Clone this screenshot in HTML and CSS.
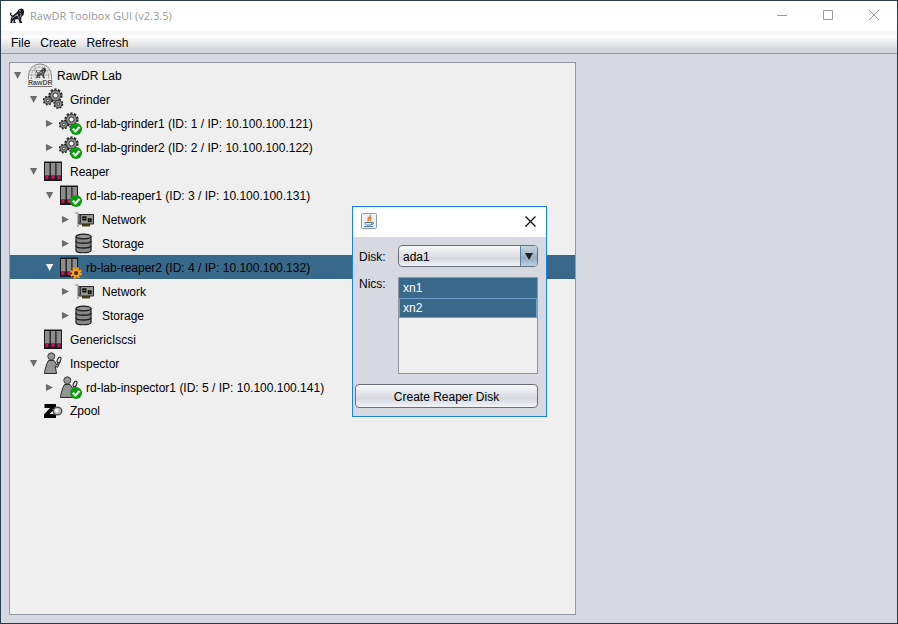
FILE: index.html
```html
<!DOCTYPE html>
<html lang="en">
<head>
    <meta charset="UTF-8">
    <meta name="viewport" content="width=device-width, initial-scale=1.0">
    <title>RawDR Toolbox GUI</title>
    <link rel="stylesheet" href="styles.css">
</head>
<body>
    <!-- shared icons -->
    <svg class="defs" width="0" height="0" aria-hidden="true">
        <defs>
            <symbol id="arrow-down" viewBox="0 0 17 24">
                <path d="M4 9h7.2L7.600 16z" fill="currentColor"/>
            </symbol>
            <symbol id="arrow-right" viewBox="0 0 17 24">
                <path d="M4 9v7l7-3.500z" fill="currentColor"/>
            </symbol>
            <symbol id="ok" viewBox="0 0 12 12">
                <circle cx="6" cy="6" r="6" fill="#0a9a0e"/>
                <path d="M2.800 5.800l2.600 2.600L9.400 4" fill="none" stroke="#fff" stroke-width="2.200"/>
            </symbol>
            <symbol id="busy" viewBox="0 0 12 12">
                <circle cx="6" cy="6" r="4.700" fill="none" stroke="#f9a01b" stroke-width="2.400" stroke-dasharray="2.100 1.590"/>
                <circle cx="6" cy="6" r="3" fill="none" stroke="#f9a01b" stroke-width="2.200"/>
                <circle cx="6" cy="6" r="1.700" fill="#403020"/>
            </symbol>
            <symbol id="grinder" viewBox="0 0 23 24">
                <g fill="none" stroke="#222">
                    <circle cx="12.500" cy="8.500" r="5.800" stroke-width="2.600" stroke-dasharray="2.200 1.440"/>
                    <circle cx="4.800" cy="13.500" r="4" stroke-width="2" stroke-dasharray="1.700 1.440"/>
                    <circle cx="15.300" cy="17" r="4" stroke-width="2" stroke-dasharray="1.700 1.440"/>
                </g>
                <g fill="#8a8a8a" stroke="#333" stroke-width=".8">
                    <circle cx="12.500" cy="8.500" r="5.300"/>
                    <circle cx="4.800" cy="13.500" r="3.600"/>
                    <circle cx="15.300" cy="17" r="3.700"/>
                </g>
                <g fill="#eee" stroke="#333" stroke-width=".9">
                    <circle cx="12.500" cy="8.500" r="2.500"/>
                    <circle cx="4.800" cy="13.500" r="1.300"/>
                    <circle cx="15.300" cy="17" r="1.300"/>
                </g>
            </symbol>
            <symbol id="reaper" viewBox="0 0 23 24">
                <path d="M1 2.500h18v19.500H1z" fill="#191919"/>
                <path d="M2 4h4.500v12.500H2zM7.800 4h4.500v12.500H7.800zM13.500 4H18v12.500h-4.500z" fill="#8d8d8d"/>
                <path d="M2 17h4.500v3.500H2zM7.800 17h4.500v3.500H7.800zM13.500 17H18v3.500h-4.500z" fill="#3a2430"/>
                <g fill="#e0116f">
                    <circle cx="4" cy="18.500" r="1.400"/>
                    <circle cx="10" cy="18.500" r="1.400"/>
                    <circle cx="15.700" cy="18.500" r="1.400"/>
                </g>
            </symbol>
            <symbol id="network" viewBox="0 0 23 24">
                <path d="M0 6h3v14" fill="none" stroke="#aaa" stroke-width="1.600"/>
                <path d="M7 17h8v2.500H7z" fill="#4c4217"/>
                <path d="M4 7.500h14.500v9.500H4z" fill="#969896" stroke="#222"/>
                <path d="M5.500 8v8" stroke="#333"/>
                <path d="M8 10h2.800v2.800H8zM13.500 12h2.500v2.500h-2.500z" fill="#7c8f30" stroke="#111" stroke-width="1.400"/>
            </symbol>
            <symbol id="storage" viewBox="0 0 23 24">
                <path d="M1 5.500v14c0 3 15 3 15 0v-14" fill="#888" stroke="#1d1d1d" stroke-width="1.200"/>
                <ellipse cx="8.500" cy="5.500" rx="7.500" ry="2.300" fill="#949494" stroke="#1d1d1d" stroke-width="1.200"/>
                <path d="M1 10c0 3 15 3 15 0M1 14.700c0 3 15 3 15 0" fill="none" stroke="#1d1d1d" stroke-width="1.400"/>
            </symbol>
            <symbol id="inspector" viewBox="0 0 23 24">
                <path d="M5.500 9.500h5.500l3 4.500 2.500-4 .8.500-2.800 6-2.300-1.500 1.300 7.500H1.500c.5-5 2-9.500 4-13z" fill="#949494" stroke="#292929"/>
                <circle cx="8.300" cy="5.300" r="3.500" fill="#949494" stroke="#444"/>
                <ellipse cx="16" cy="9" rx="1.600" ry="3" transform="rotate(25 16 9)" fill="#ddd" stroke="#222"/>
            </symbol>
            <symbol id="zpool" viewBox="0 0 23 24">
                <path d="M1.500 6H13v3.500L6.500 16H13v4H1v-3.500L7 10H1.500z" fill="#050505"/>
                <ellipse cx="14.500" cy="13" rx="4.300" ry="3.800" fill="#bbb" stroke="#555" stroke-width="1.400"/>
                <circle cx="13.800" cy="12.500" r="2" fill="#eee"/>
            </symbol>
            <symbol id="lion" viewBox="0 0 16 18">
                <path d="M8.500 4l1-2 3-1.500 2.500.5 1 3-.5 3.500-2.500 2.500-.5 4 1.500 2v1H11l-1-4-3.500-.5-1 3L7 16v1H4v-4l-1.500 3L3.500 17H.5L1 13l1-3.500-2-2L.5 5l1.500.5L1.500 7.500l2 1z" fill="#1a1a1a"/>
                <path d="M10.500 3l2 .5M5 9.500l4-2M11 6l2 1M9.500 9.500l1 2.500M4 10l-1 2M12.500 8l-1 2M8 7l1 2" stroke="#ddd" stroke-width=".9" fill="none"/>
            </symbol>
            <symbol id="rawdr" viewBox="0 0 26 24">
                <path d="M1.500 16.500v-4a11.500 11.500 0 0 1 23 0v4" fill="#e8e8e8" stroke="#888"/>
                <path d="M4.500 16v-3.500a8.500 8.500 0 0 1 17 0V16" fill="none" stroke="#999" stroke-dasharray="2 1"/>
                <path d="M3.500 7.500h19M2 12h22M8 3l1 13M17.500 3l-.5 13" stroke="#b0b0b0" fill="none"/>
                <use href="#lion" x="9" y="4" width="10" height="12" opacity=".8"/>
                <text x="1" y="22" class="logo-text">RawDR</text>
                <path d="M1 23.500h24" stroke="#777"/>
            </symbol>
        </defs>
    </svg>

    <div class="window">
        <header class="titlebar">
            <svg class="app-icon"><use href="#lion"/></svg>
            <h1 class="title">RawDR Toolbox GUI (v2.3.5)</h1>
            <div class="controls">
                <button type="button" aria-label="Minimize"><svg width="10" height="10"><path d="M0 5.500h10"/></svg></button>
                <button type="button" aria-label="Maximize"><svg width="10" height="10"><path d="M.5.5h9v9h-9z"/></svg></button>
                <button type="button" aria-label="Close"><svg width="10" height="10"><path d="M0 0l10 10M10 0L0 10"/></svg></button>
            </div>
        </header>

        <nav class="menubar">
            <button type="button">File</button>
            <button type="button">Create</button>
            <button type="button">Refresh</button>
        </nav>

        <main class="content">
            <div class="tree" role="tree">
                <div class="row" role="treeitem">
                    <svg class="arrow"><use href="#arrow-down"/></svg>
                    <svg class="icon root"><use href="#rawdr"/></svg>
                    <span>RawDR Lab</span>
                </div>
                <div class="row level1" role="treeitem">
                    <svg class="arrow"><use href="#arrow-down"/></svg>
                    <svg class="icon"><use href="#grinder"/></svg>
                    <span>Grinder</span>
                </div>
                <div class="row level2" role="treeitem">
                    <svg class="arrow"><use href="#arrow-right"/></svg>
                    <svg class="icon"><use href="#grinder"/><use href="#ok" x="11" y="12" width="12" height="12"/></svg>
                    <span>rd-lab-grinder1 (ID: 1 / IP: 10.100.100.121)</span>
                </div>
                <div class="row level2" role="treeitem">
                    <svg class="arrow"><use href="#arrow-right"/></svg>
                    <svg class="icon"><use href="#grinder"/><use href="#ok" x="11" y="12" width="12" height="12"/></svg>
                    <span>rd-lab-grinder2 (ID: 2 / IP: 10.100.100.122)</span>
                </div>
                <div class="row level1" role="treeitem">
                    <svg class="arrow"><use href="#arrow-down"/></svg>
                    <svg class="icon"><use href="#reaper"/></svg>
                    <span>Reaper</span>
                </div>
                <div class="row level2" role="treeitem">
                    <svg class="arrow"><use href="#arrow-down"/></svg>
                    <svg class="icon"><use href="#reaper"/><use href="#ok" x="11" y="12" width="12" height="12"/></svg>
                    <span>rd-lab-reaper1 (ID: 3 / IP: 10.100.100.131)</span>
                </div>
                <div class="row level3" role="treeitem">
                    <svg class="arrow"><use href="#arrow-right"/></svg>
                    <svg class="icon"><use href="#network"/></svg>
                    <span>Network</span>
                </div>
                <div class="row level3" role="treeitem">
                    <svg class="arrow"><use href="#arrow-right"/></svg>
                    <svg class="icon"><use href="#storage"/></svg>
                    <span>Storage</span>
                </div>
                <div class="row level2 selected" role="treeitem" aria-selected="true">
                    <svg class="arrow"><use href="#arrow-down"/></svg>
                    <svg class="icon"><use href="#reaper"/><use href="#busy" x="11" y="12" width="12" height="12"/></svg>
                    <span>rb-lab-reaper2 (ID: 4 / IP: 10.100.100.132)</span>
                </div>
                <div class="row level3" role="treeitem">
                    <svg class="arrow"><use href="#arrow-right"/></svg>
                    <svg class="icon"><use href="#network"/></svg>
                    <span>Network</span>
                </div>
                <div class="row level3" role="treeitem">
                    <svg class="arrow"><use href="#arrow-right"/></svg>
                    <svg class="icon"><use href="#storage"/></svg>
                    <span>Storage</span>
                </div>
                <div class="row level1" role="treeitem">
                    <svg class="arrow"></svg>
                    <svg class="icon"><use href="#reaper"/></svg>
                    <span>GenericIscsi</span>
                </div>
                <div class="row level1" role="treeitem">
                    <svg class="arrow"><use href="#arrow-down"/></svg>
                    <svg class="icon"><use href="#inspector"/></svg>
                    <span>Inspector</span>
                </div>
                <div class="row level2" role="treeitem">
                    <svg class="arrow"><use href="#arrow-right"/></svg>
                    <svg class="icon"><use href="#inspector"/><use href="#ok" x="11" y="12" width="12" height="12"/></svg>
                    <span>rd-lab-inspector1 (ID: 5 / IP: 10.100.100.141)</span>
                </div>
                <div class="row level1" role="treeitem">
                    <svg class="arrow"></svg>
                    <svg class="icon"><use href="#zpool"/></svg>
                    <span>Zpool</span>
                </div>
            </div>
        </main>
    </div>

    <form class="dialog" role="dialog" aria-label="Create Reaper Disk">
        <div class="dialog-title">
            <svg width="16" height="16">
                <rect x=".5" y=".5" width="15" height="15" rx="1" fill="#edf1f5" stroke="#8b9bad"/>
                <path d="M9 2c2 2-4 3-1.500 6.500M10.500 4.500c-2.500 1-1.500 2-.500 3.500" fill="none" stroke="#e8822a" stroke-width="1.500"/>
                <path d="M4 9.500h7c0 2-1 2.500-2 2.500H6c-1 0-2-1-2-2.500zM11 9.500c3-.500 2 2-1 2M3 13.500h9" fill="none" stroke="#4d7a9e"/>
            </svg>
            <button type="button" class="dialog-close" aria-label="Close"><svg width="11" height="11"><path d="M.5.5l10 10M10.500.5l-10 10"/></svg></button>
        </div>
        <div class="fields">
            <label for="disk">Disk:</label>
            <div class="combo">
                <select id="disk"><option>ada1</option></select>
            </div>
            <label for="nics">Nics:</label>
            <select id="nics" class="list" multiple size="4">
                <option selected>xn1</option>
                <option class="lead" selected>xn2</option>
            </select>
        </div>
        <button type="button" class="create">Create Reaper Disk</button>
    </form>
</body>
</html>
```
FILE: styles.css
```css
* {
    box-sizing: border-box;
}
body {
    margin: 0;
    font-family: "Liberation Sans", Arial, sans-serif;
    font-size: 12px;
    line-height: 16px;
    color: #000;
}
button, select {
    font: inherit;
    color: inherit;
}
.defs {
    position: absolute;
}
.window {
    display: flex;
    flex-direction: column;
    min-height: 100vh;
    border: 1px solid #2a3b4d;
    background: #d6d9e0;
}

/* title bar */
.titlebar {
    display: flex;
    align-items: center;
    height: 30px;
    padding-left: 8px;
    background: #fff;
}
.app-icon {
    width: 16px;
    height: 16px;
}
.title {
    flex: 1;
    margin: 0 0 0 5px;
    font-family: "Open Sans", sans-serif;
    font-size: 11px;
    font-weight: normal;
    color: #999;
}
.controls {
    display: flex;
}
.controls button {
    display: flex;
    align-items: center;
    justify-content: center;
    width: 46px;
    height: 30px;
    padding: 0 0 2px;
    border: 0;
    background: none;
}
.controls svg {
    fill: none;
    stroke: #999;
}

/* menu */
.menubar {
    display: flex;
    gap: 10px;
    height: 23px;
    padding: 0 10px;
    border-bottom: 1px solid #9297a1;
    background: linear-gradient(#f7f7f7 0, #f7f7f7 4px, #fff 5px, #d3d6da 19px, #d6d9dc 100%);
}
.menubar button {
    padding: 2px 0 0;
    border: 0;
    background: none;
}

/* tree */
.content {
    flex: 1;
    display: grid;
    grid-template-columns: 29fr 16fr;
    padding: 8px;
}
.tree {
    border: 1px solid #9297a1;
    background: #efefef;
}
.row {
    display: flex;
    align-items: center;
    height: 24px;
    white-space: nowrap;
}
.row span {
    padding-top: 2px;
}
.row:last-child {
    height: 22px;
}
.level1 {
    padding-left: 16px;
}
.level2 {
    padding-left: 32px;
}
.level3 {
    padding-left: 48px;
}
.selected {
    background: #39698a;
}
.arrow {
    width: 17px;
    height: 24px;
    color: #6b6b6b;
}
.selected .arrow {
    color: #fff;
}
.icon {
    width: 23px;
    height: 24px;
    margin-right: 4px;
}
.root {
    width: 26px;
}
.logo-text {
    font-size: 7px;
    font-weight: bold;
    fill: #555;
}

/* dialog */
.dialog {
    position: absolute;
    left: 352px;
    top: 206px;
    width: 195px;
    border: 1px solid #1883d7;
    background: #d6d9e0;
}
.dialog-title {
    display: flex;
    align-items: center;
    justify-content: space-between;
    height: 30px;
    padding: 0 10px 2px 8px;
    background: #fff;
}
.dialog-close {
    display: flex;
    padding: 0;
    border: 0;
    background: none;
}
.dialog-close svg {
    stroke: #000;
    stroke-width: 1.2;
}
.fields {
    display: grid;
    grid-template-columns: 39px 1fr;
    row-gap: 10px;
    padding: 8px 8px 0 6px;
}
.fields label {
    padding-top: 4px;
}
.fields label[for="nics"] {
    padding-top: 0;
    line-height: 14px;
}
.combo {
    position: relative;
    height: 22px;
}
.combo select {
    appearance: none;
    width: 100%;
    height: 22px;
    padding: 2px 22px 0 4px;
    border: 1px solid #6a7079;
    border-radius: 4px;
    background: linear-gradient(#f6f7f8, #dcdfe4 50%, #d4d7dd 60%, #f0f2f6);
}
.combo::after {
    content: "";
    position: absolute;
    top: 1px;
    right: 1px;
    width: 16px;
    height: 20px;
    border-left: 1px solid #5c7d98;
    border-radius: 0 3px 3px 0;
    background: linear-gradient(#c7d5e0, #9eb5c6 50%, #94adc0 60%, #bdd2e2);
    pointer-events: none;
}
.combo::before {
    content: "";
    position: absolute;
    z-index: 1;
    top: 8px;
    right: 5px;
    border: 4px solid transparent;
    border-top: 7px solid #222;
    border-bottom: 0;
    pointer-events: none;
}
.list {
    height: 97px;
    padding: 0;
    border: 1px solid #9297a1;
    border-radius: 0;
    outline: 0;
    background: #efefef;
    overflow: hidden;
}
.list option {
    height: 20px;
    padding: 3px 4px 1px;
    border-radius: 0;
}
.list option:checked {
    background: linear-gradient(#39698a, #39698a);
    -webkit-text-fill-color: #fff;
}
.list .lead {
    padding: 2px 3px 0;
    border: 1px solid #6ba0d0;
}
.create {
    display: block;
    width: calc(100% - 10px);
    height: 24px;
    margin: 10px 8px 8px 2px;
    padding: 2px 0 0;
    border: 1px solid #6a7079;
    border-radius: 4px;
    background: linear-gradient(#f8f8fa, #dcdfe4 50%, #d4d7dd 60%, #f2f4f8);
}
```
